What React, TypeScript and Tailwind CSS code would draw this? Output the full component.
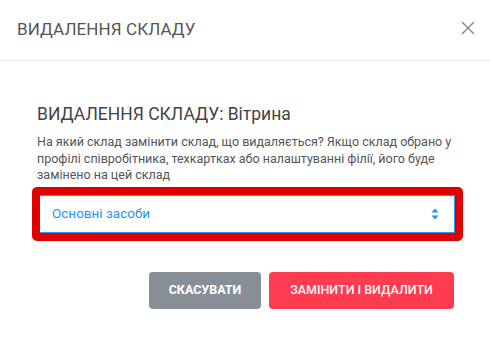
import { useState } from 'react';

const warehouses = ['Основні засоби', 'Вітрина', 'Склад 1'];

function SortIcon() {
  return (
    <svg width="8" height="12" viewBox="0 0 8 12" fill="#2196f3">
      <path d="M4 0.5 L7.5 4.5 H0.5 Z" />
      <path d="M4 11.5 L7.5 7.5 H0.5 Z" />
    </svg>
  );
}

export default function App() {
  const [value, setValue] = useState(warehouses[0]);
  return (
    <div className="w-[490px] h-[343px] bg-white font-['Roboto',sans-serif] overflow-hidden">
      <div className="h-[62px] flex items-center justify-between pl-[17px] pr-[15px] border-b-[3px] border-[#f2f2f2]">
        <h2 className="text-[17px] text-[#555] tracking-[0.1px]">ВИДАЛЕННЯ СКЛАДУ</h2>
        <button className="text-[#888] pb-1">
          <svg width="14" height="14" viewBox="0 0 14 14" stroke="currentColor" strokeWidth="1.4" fill="none">
            <path d="M1 1 L13 13 M13 1 L1 13" />
          </svg>
        </button>
      </div>
      <div className="pt-[41px] px-[32px]">
        <h3 className="px-[5px] text-[17.5px] text-[#444] leading-[22px]">ВИДАЛЕННЯ СКЛАДУ: Вітрина</h3>
        <p className="px-[5px] mt-[9px] text-[12.5px] text-[#555] leading-[16.5px]">
          На який склад замінити склад, що видаляється? Якщо склад обрано у профілі співробітника, техкартках або налаштуванні філії, його буде замінено на цей склад
        </p>
        <div className="mt-[3px] w-[431px] border-[8px] border-[#e00000] rounded-[5px]">
          <div className="relative h-[38px] border border-[#2196f3] border-l-0 bg-white flex items-center">
            <select
              value={value}
              onChange={(e) => setValue(e.target.value)}
              className="appearance-none w-full h-full pl-[12px] text-[13.5px] text-[#2196f3] bg-transparent outline-none"
            >
              {warehouses.map((w) => (
                <option key={w}>{w}</option>
              ))}
            </select>
            <span className="absolute right-[15px] top-1/2 -translate-y-1/2 pointer-events-none flex">
              <SortIcon />
            </span>
          </div>
        </div>
        <div className="mt-[31px] flex justify-end gap-[8px] pr-[4px]">
          <button className="w-[112px] h-[37px] rounded-[4px] bg-[#878e95] text-white text-[12.5px] font-bold">
            СКАСУВАТИ
          </button>
          <button className="w-[185px] h-[37px] rounded-[4px] bg-[#ff3b4f] text-white text-[12.5px] font-medium">
            ЗАМІНИТИ І ВИДАЛИТИ
          </button>
        </div>
      </div>
    </div>
  );
}
